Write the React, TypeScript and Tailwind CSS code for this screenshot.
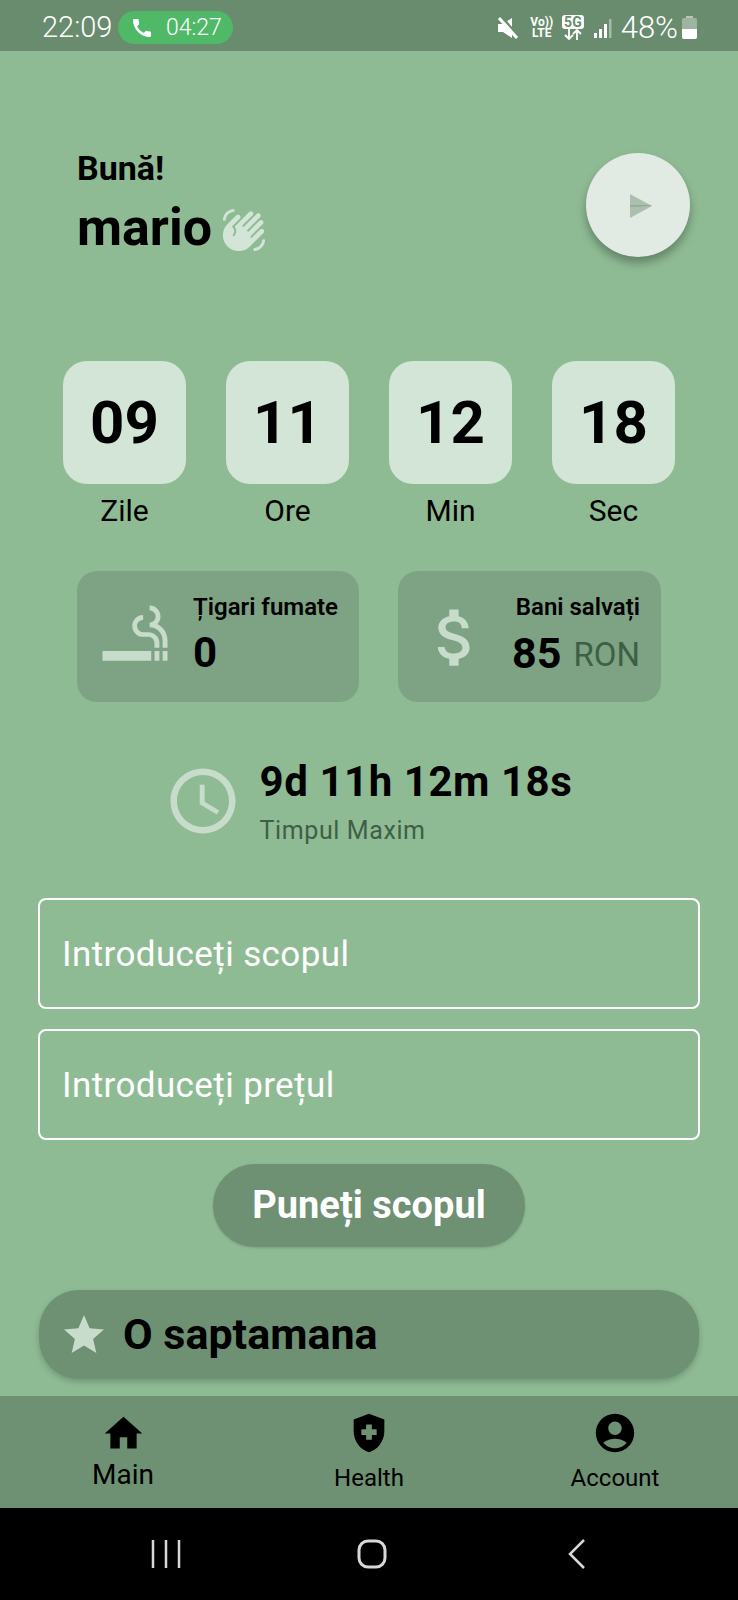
import React from 'react';
import {
  MdAccountCircle,
  MdAccessTime,
  MdAttachMoney,
  MdCall,
  MdHealthAndSafety,
  MdHome,
  MdOutlineSmokingRooms,
  MdStar,
  MdWavingHand,
} from 'react-icons/md';

const timer = [
  { value: '09', label: 'Zile' },
  { value: '11', label: 'Ore' },
  { value: '12', label: 'Min' },
  { value: '18', label: 'Sec' },
];

const StatusBar = () => (
  <div className="h-[51px] bg-[#6a8c6e] flex items-center justify-between pl-[42px] pr-[41px] pt-[4px] text-white shrink-0">
    <div className="flex items-center gap-[6px]">
      <span className="text-[29px] font-light leading-none">22:09</span>
      <div className="h-[33px] w-[115px] rounded-full bg-[#4fb968] flex items-center justify-center gap-[12px]">
        <MdCall size={24} />
        <span className="text-[23px] font-light leading-none">04:27</span>
      </div>
    </div>
    <div className="flex items-center">
      {/* muted speaker */}
      <svg width="22" height="22" viewBox="0 0 22 22" className="mr-[11px]">
        <path d="M1 7h5l9-6v20l-9-6H1z" fill="#fff" />
        <path d="M5 0 L22 20" stroke="#6a8c6e" strokeWidth="2.5" />
        <path d="M2 1 L20 21" stroke="#fff" strokeWidth="3" />
      </svg>
      <div className="flex flex-col items-center text-[12px] font-bold leading-[11px] mr-[9px]">
        <span>Vo))</span>
        <span>LTE</span>
      </div>
      <div className="flex flex-col items-center mr-[10px]">
        <span className="bg-white text-[#6a8c6e] rounded-[3px] px-[2px] text-[14px] font-bold leading-[14px]">5G</span>
        <svg width="20" height="11" viewBox="0 0 20 11" fill="none" stroke="#fff" strokeWidth="1.8">
          <path d="M6 0v10M2 6l4 4 4-4M14 11V1M10 5l4-4 4 4" />
        </svg>
      </div>
      <svg width="18" height="22" viewBox="0 0 18 22" className="mr-[9px]">
        <rect x="0" y="16" width="3" height="5" fill="#fff" />
        <rect x="5" y="12" width="3" height="9" fill="#fff" />
        <rect x="10" y="7" width="3" height="14" fill="#fff" />
        <rect x="15" y="2" width="2.5" height="19" fill="#fff" opacity="0.4" />
      </svg>
      <span className="text-[31px] font-light leading-none">48%</span>
      <svg width="15" height="23" viewBox="0 0 15 23" className="ml-[4px]">
        <rect x="4" y="0" width="7" height="2" fill="#fff" opacity="0.5" />
        <rect x="0" y="2" width="15" height="21" rx="2" fill="#fff" opacity="0.35" />
        <path d="M0 13h15v8a2 2 0 0 1-2 2H2a2 2 0 0 1-2-2z" fill="#fff" />
      </svg>
    </div>
  </div>
);

const Greeting = () => (
  <div className="flex items-start justify-between pl-[77px] pr-[48px] pt-[102px]">
    <div className="-mt-[2px]">
      <div className="text-[34px] font-bold leading-[35px] text-black">Bună!</div>
      <div className="flex items-center mt-[15px] h-[54px]">
        <span className="text-[52px] font-bold leading-[54px] text-black">mario</span>
        <MdWavingHand size={46} className="text-[#d3e5d6] ml-[9px] mt-[4px]" />
      </div>
    </div>
    <div className="w-[104px] h-[104px] rounded-full bg-[#e2ebe3] shadow-[0_6px_10px_rgba(0,0,0,0.3)] flex items-center justify-center">
      <svg width="24" height="26" viewBox="0 0 24 26" className="ml-[5px] mt-[2px]">
        <path d="M1 1 L23 13 L1 25 Z" fill="#adbfaf" />
        <path d="M1 12 H21 L23 13 L1 14 Z" fill="#96ac99" />
      </svg>
    </div>
  </div>
);

const Timer = () => (
  <div className="flex justify-between pl-[63px] pr-[63px] mt-[104px]">
    {timer.map((t) => (
      <div key={t.label} className="w-[123px] flex flex-col items-center">
        <div className="w-[123px] h-[123px] rounded-[24px] bg-[#d3e5d6] flex items-center justify-center text-[60px] font-bold text-black leading-none">
          {t.value}
        </div>
        <span className="text-[30px] text-black leading-[33px] mt-[10px]">{t.label}</span>
      </div>
    ))}
  </div>
);

const Stats = () => (
  <div className="flex justify-between pl-[77px] pr-[77px] mt-[44px]">
    <div className="w-[282px] h-[131px] rounded-[20px] bg-[#7ea384] flex items-start pl-[19px]">
      <MdOutlineSmokingRooms size={78} className="text-[#c8dccb] mr-[19px] mt-[28px]" />
      <div className="pt-[22px]">
        <div className="text-[24px] font-semibold leading-[28px] text-black">Țigari fumate</div>
        <div className="text-[42px] font-bold leading-[50px] mt-[7px] text-black">0</div>
      </div>
    </div>
    <div className="w-[263px] h-[131px] rounded-[20px] bg-[#7ea384] flex items-start justify-between pl-[20px] pr-[21px]">
      <MdAttachMoney size={75} className="text-[#c8dccb] mt-[29px]" />
      <div className="flex flex-col items-end pt-[22px]">
        <div className="text-[24px] font-semibold leading-[28px] text-black">Bani salvați</div>
        <div className="flex items-baseline gap-[12px] leading-[50px] mt-[7px]">
          <span className="text-[43px] font-bold text-black">85</span>
          <span className="text-[33px] text-[#3f5f45] -translate-y-[2px]">RON</span>
        </div>
      </div>
    </div>
  </div>
);

const BestTime = () => (
  <div className="flex items-center justify-center mt-[54px] pr-[2px]">
    <MdAccessTime size={78} className="text-[#c8dccb] mr-[18px]" />
    <div>
      <div className="text-[42px] font-bold leading-[50px] text-black tracking-[0.55px] mt-[1px]">9d 11h 12m 18s</div>
      <div className="text-[25px] leading-[30px] mt-[9px] text-[#3f5f45] tracking-[0.6px]">Timpul Maxim</div>
    </div>
  </div>
);

const Field = ({ label }: { label: string }) => (
  <div className="h-[111px] rounded-[8px] border-2 border-white flex items-center pl-[22px] pt-[3px] text-[35px] text-white tracking-[0.4px]">
    {label}
  </div>
);

const GoalForm = () => (
  <div className="mt-[52px] pl-[38px] pr-[38px] flex flex-col gap-[20px]">
    <Field label="Introduceți scopul" />
    <Field label="Introduceți prețul" />
  </div>
);

const BottomNav = () => (
  <div className="h-[112px] bg-[#6e9073] grid grid-cols-3 shrink-0 text-black">
    <div className="flex flex-col items-center pt-[15px]">
      <MdHome size={45} />
      <span className="text-[28px] leading-[31px] mt-[3px]">Main</span>
    </div>
    <div className="flex flex-col items-center pt-[14px]">
      <MdHealthAndSafety size={46} />
      <span className="text-[24px] leading-[26px] mt-[9px]">Health</span>
    </div>
    <div className="flex flex-col items-center pt-[14px]">
      <MdAccountCircle size={46} />
      <span className="text-[24px] leading-[26px] mt-[9px]">Account</span>
    </div>
  </div>
);

const SystemNav = () => (
  <div className="h-[92px] bg-black flex items-center pl-[151px] shrink-0">
    <svg width="30" height="30" viewBox="0 0 30 30" stroke="#d8d8d8" strokeWidth="2.5">
      <path d="M2 1v28M15 1v28M28 1v28" />
    </svg>
    <svg width="30" height="30" viewBox="0 0 30 30" fill="none" stroke="#d8d8d8" strokeWidth="3" className="ml-[176px]">
      <rect x="2" y="2" width="26" height="26" rx="9" />
    </svg>
    <svg width="20" height="32" viewBox="0 0 20 32" fill="none" stroke="#d8d8d8" strokeWidth="2.5" className="ml-[180px]">
      <path d="M17 2 L3 16 L17 30" />
    </svg>
  </div>
);

export default function App() {
  return (
    <div className="w-[738px] h-[1600px] bg-[#8ebb94] flex flex-col overflow-hidden font-['Roboto',sans-serif]">
      <StatusBar />
      <div className="flex-1 min-h-0">
        <Greeting />
        <Timer />
        <Stats />
        <BestTime />
        <GoalForm />
        <div className="flex justify-center mt-[24px]">
          <button className="w-[312px] h-[83px] rounded-full bg-[#6e9073] shadow-[0_1px_3px_rgba(0,0,0,0.15)] text-white text-[38px] font-bold">
            Puneți scopul
          </button>
        </div>
        <div className="mx-[39px] mt-[43px] h-[89px] rounded-[40px] bg-[#6e9073] shadow-[0_3px_6px_rgba(0,0,0,0.2)] flex items-center pl-[21px]">
          <MdStar size={48} className="text-[#c8dccb]" />
          <span className="ml-[15px] text-[43px] font-bold text-black">O saptamana</span>
        </div>
      </div>
      <BottomNav />
      <SystemNav />
    </div>
  );
}
